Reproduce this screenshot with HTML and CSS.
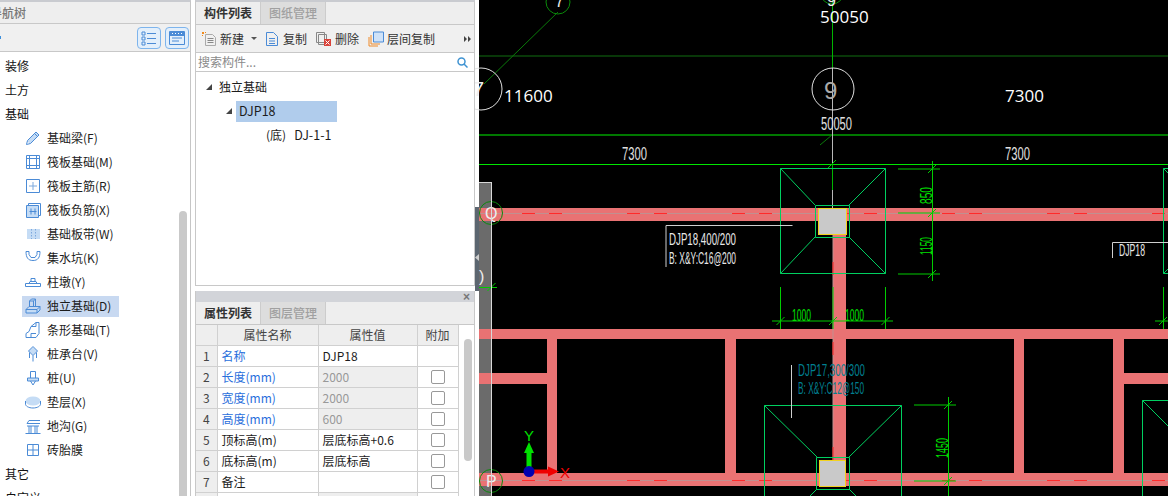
FILE: index.html
```html
<!DOCTYPE html>
<html lang="zh">
<head>
<meta charset="utf-8">
<title>构件列表</title>
<link rel="stylesheet" href="styles.css">
</head>
<body>
<div class="page">
  <section class="nav">
    <div class="nav-title"><span>导航树</span></div>
    <div class="nav-tools">
      <span class="nav-mark"></span>
      <button class="tool-btn"><svg width="16" height="16" viewBox="0 0 16 16" class="ico"><path d="M1 2h3v3H1zM1 7h3v3H1zM1 12h3v3H1zM6 3.500h9M6 8.500h9M6 13.500h9"/></svg></button>
      <button class="tool-btn"><svg width="16" height="16" viewBox="0 0 16 16" class="ico"><path d="M.5 1.500h15v13H.5zM3 8h10M3 11h7"/><path class="solid" d="M1 2h14v4H1z"/><path class="white" d="M3 3h1v1H3zM6 3h1v1H6zM9 3h1v1H9zM12 3h1v1h-1z"/></svg></button>
    </div>
    <div class="nav-body">
      <ul class="nav-list">
        <li class="nav-group">装修</li>
        <li class="nav-group">土方</li>
        <li class="nav-group">基础</li>
        <li class="nav-item"><svg width="16" height="16" viewBox="0 0 16 16" class="ico"><path class="tint" d="M2 11L11 2l3 3-9 9z"/><path d="M1.500 14.500l1-4L11 2l3 3-8.500 8.500zM9.500 3.500l3 3"/></svg>基础梁(F)</li>
        <li class="nav-item"><svg width="16" height="16" viewBox="0 0 16 16" class="ico"><path class="thin" d="M4.500 4.500h7v7h-7z"/><path d="M1.500 1.500h13v13h-13zM1.500 4.500h13M1.500 11.500h13M4.500 1.500v13M11.500 1.500v13"/></svg>筏板基础(M)</li>
        <li class="nav-item"><svg width="16" height="16" viewBox="0 0 16 16" class="ico"><path d="M1.500 1.500h13v13h-13z"/><path class="thin" d="M8 4v8M4 8h8"/></svg>筏板主筋(R)</li>
        <li class="nav-item"><svg width="16" height="16" viewBox="0 0 16 16" class="ico"><path class="tint" d="M1.500 3.500h12v12h-12z"/><path d="M1.500 3.500h12v12h-12zM3.500 3.500v-2h12v12h-2M6 6.500v6M10 6.500v6M4.500 9.500h7"/></svg>筏板负筋(X)</li>
        <li class="nav-item"><svg width="16" height="16" viewBox="0 0 16 16" class="ico"><path class="tint" d="M2 3h13v10H2z"/><path class="thin" stroke-dasharray="1.500 1.500" d="M6.500 3v10M10.500 3v10"/></svg>基础板带(W)</li>
        <li class="nav-item"><svg width="16" height="16" viewBox="0 0 16 16" class="ico"><path d="M1 1.500h3v3l2 3h4l2-3v-3h3M1 1.500c0 6 2 9 7 9s7-3 7-9"/></svg>集水坑(K)</li>
        <li class="nav-item"><svg width="16" height="16" viewBox="0 0 16 16" class="ico"><path d="M.500 12.500h15v-3H.500zM4 9.500l1-2h6l1 2M6 7.500v-3h4v3"/></svg>柱墩(Y)</li>
        <li class="nav-item active"><svg width="16" height="16" viewBox="0 0 16 16" class="ico"><path class="tint" d="M1 11h14v4H1z"/><path d="M1 11.500l3-3h11l-3 3zM1 11.500h11v3.500H1zM12 15l3-3v-3.500M4.500 9V3l2-2h4v7.500M4.500 3h4v5.500M8.500 3l2-2"/></svg>独立基础(D)</li>
        <li class="nav-item"><svg width="16" height="16" viewBox="0 0 16 16" class="ico"><path d="M1 15.500v-4l3-2 2-5 5-4h3v11l-3 4zM6 4.500h5v-4M6 15.500v-4h5"/></svg>条形基础(T)</li>
        <li class="nav-item"><svg width="16" height="16" viewBox="0 0 16 16" class="ico"><path class="tint" d="M8 1l4.500 4L8 9 3.500 5z"/><path d="M8 .5l4.500 4.500L8 9.500 3.500 5zM4.500 6.500V12M8 9.500v6M11.500 6.500V12"/></svg>桩承台(V)</li>
        <li class="nav-item"><svg width="16" height="16" viewBox="0 0 16 16" class="ico"><path class="tint" d="M3 8h10v3H3z"/><path d="M5.500 8V1.500h5V8M2.500 8h11v3h-11zM5.500 11l2.500 4 2.500-4"/></svg>桩(U)</li>
        <li class="nav-item"><svg width="16" height="16" viewBox="0 0 16 16" class="ico"><ellipse class="tint" cx="8" cy="7" rx="7.500" ry="4.500"/><path d="M.500 7v3c0 2 3 4 7.500 4s7.500-2 7.500-4V7"/></svg>垫层(X)</li>
        <li class="nav-item"><svg width="16" height="16" viewBox="0 0 16 16" class="ico"><path d="M.500 15.500h15M2 5.500h13M2 5.500l2-3h11M2 8h12M4 8v7.500M12 8v7.500M6 8v7.500M10 8v7.500"/></svg>地沟(G)</li>
        <li class="nav-item"><svg width="16" height="16" viewBox="0 0 16 16" class="ico"><path d="M2.500 2.500h11v11h-11zM8 2.500v11M2.500 8h11"/></svg>砖胎膜</li>
        <li class="nav-group">其它</li>
        <li class="nav-group">自定义</li>
      </ul>
      <div class="thumb nav-thumb"></div>
    </div>
  </section>

  <div class="middle">
    <section class="parts">
      <div class="tabs">
        <span class="tab on">构件列表</span>
        <span class="tab">图纸管理</span>
      </div>
      <div class="toolbar">
        <span class="act"><svg width="16" height="16" viewBox="0 0 16 16" class="doc"><path d="M4.500 3.500h7l3 3v8h-10z"/><path class="lines" d="M6.500 7.500h6M6.500 9.500h6M6.500 11.500h6"/><path class="spark" d="M1 1h2v2H1zM4 1h1v1H4zM1 4h1v1H1z"/></svg>新建<i class="caret"></i></span>
        <span class="act"><svg width="15" height="16" viewBox="0 0 15 16" class="ico"><path d="M1.500 1.500h7l4 4v9h-11zM4 7.500h6M4 10h6M4 12.500h6"/></svg>复制</span>
        <span class="act"><svg width="16" height="16" viewBox="0 0 16 16" class="del"><path d="M.5 1.500h8v10H.5zM2.500 3.500h8v10h-8z"/><path class="box" d="M8 8h7v7H8z"/><path class="x" d="M9.500 9.500l4 4M13.500 9.500l-4 4"/></svg>删除</span>
        <span class="act"><svg width="16" height="16" viewBox="0 0 16 16" class="lay"><path class="back" d="M1 6v9h9M3 4v9h9"/><path class="front" d="M5.500 1h10v10h-10z"/></svg>层间复制</span>
        <span class="more">
          <svg width="8" height="8" viewBox="0 0 8 8"><path d="M0 1l3 3-3 3zM4 1l3 3-3 3z"/></svg>
        </span>
      </div>
      <div class="search">
        <span>搜索构件...</span>
        <svg width="11" height="11" viewBox="0 0 11 11"><circle cx="4.500" cy="4.500" r="3.500"/><path d="M7 7l3.500 3.500"/></svg>
      </div>
      <ul class="tree">
        <li class="tree-row"><i class="tri"></i>独立基础</li>
        <li class="tree-row lv2"><i class="tri"></i><span class="sel">DJP18</span></li>
        <li class="tree-row lv3"><span>(底)</span><span class="code">DJ-1-1</span></li>
      </ul>
    </section>

    <section class="props">
      <div class="closebar"><span>×</span></div>
      <div class="tabs">
        <span class="tab on">属性列表</span>
        <span class="tab">图层管理</span>
      </div>
      <div class="grid-wrap">
        <table class="grid">
          <colgroup><col class="c0"><col class="c1"><col class="c2"><col class="c3"></colgroup>
          <thead><tr><th></th><th>属性名称</th><th>属性值</th><th>附加</th></tr></thead>
          <tbody>
            <tr><th>1</th><td class="pub">名称</td><td>DJP18</td><td></td></tr>
            <tr><th>2</th><td class="pub">长度(mm)</td><td class="ro">2000</td><td class="ck"><i></i></td></tr>
            <tr><th>3</th><td class="pub">宽度(mm)</td><td class="ro">2000</td><td class="ck"><i></i></td></tr>
            <tr><th>4</th><td class="pub">高度(mm)</td><td class="ro">600</td><td class="ck"><i></i></td></tr>
            <tr><th>5</th><td>顶标高(m)</td><td>层底标高+0.6</td><td class="ck"><i></i></td></tr>
            <tr><th>6</th><td>底标高(m)</td><td>层底标高</td><td class="ck"><i></i></td></tr>
            <tr><th>7</th><td>备注</td><td></td><td class="ck"><i></i></td></tr>
            <tr><th></th><td></td><td class="ro"></td><td></td></tr>
          </tbody>
        </table>
        <div class="thumb grid-thumb"></div>
      </div>
    </section>
  </div>

  <svg class="cad" width="693" height="496" viewBox="475 0 693 496">
    <rect class="c-white" x="475" y="0" width="4" height="496"/>
    <rect class="c-slate" x="475" y="207" width="4" height="84"/>
    <rect class="c-black" x="479" y="0" width="689" height="496"/>
    <rect class="c-grey" x="479" y="182" width="12" height="314"/>
    <path class="c-tri" d="M479 254v7l-4-3.500z"/>

    <g class="beam">
      <rect x="479" y="208" width="689" height="13"/>
      <rect x="479" y="329" width="689" height="10"/>
      <rect x="479" y="473" width="689" height="13"/>
      <rect x="479" y="373" width="68" height="11"/>
      <rect x="1124" y="373" width="44" height="11"/>
      <rect x="547" y="339" width="10" height="134"/>
      <rect x="725" y="339" width="11" height="134"/>
      <rect x="1014" y="339" width="10" height="134"/>
      <rect x="1113" y="339" width="11" height="134"/>
      <rect x="833" y="221" width="13" height="265"/>
    </g>
    <path class="axis-grey" d="M479 213.500H1168M479 480.500H1168M833 221V486"/>
    <path class="axis-red" d="M522 213.500H1168M522 480.500H1168"/>
    <path class="axis-red-v" d="M833 262v13M833 342v13M833 447v13"/>

    <path class="dark-line" d="M479 56H1168"/>
    <path class="mid-line" d="M479 135H1168"/>
    <path class="bright-line" d="M479 164.500H1168"/>
    <path class="diag" d="M558 12L484 84M832 135l-12 10"/>
    <path class="vert-green" d="M832.500 0V68M832.500 164V190"/>
    <path class="vert-grey" d="M832.500 68V164M832.500 190V235"/>

    <g class="found">
      <path d="M780.500 168.500h105v105h-105zM780.500 168.500L815 205M885.500 168.500L849 205M780.500 273.500L815 237M885.500 273.500L849 237"/>
      <path d="M815.500 205.500h34v32h-34z"/>
      <path d="M764.500 405.500h137M764.500 405.500V496M901.500 405.500V496M764.500 405.500L817 457M901.500 405.500L849 457M817 489l-7 7M849 489l7 7"/>
      <path d="M816.500 457.500h33v32h-33z"/>
      <path d="M1163.500 168.500H1168M1163.500 168.500V273.500H1168M1163.500 168.500l5 5M1163.500 273.500l5-5"/>
      <path d="M1142.500 400.500H1168M1142.500 400.500V496M1142.500 400.500L1168 426"/>
    </g>
    <rect class="col" x="818.500" y="208.500" width="28" height="26"/>
    <rect class="col" x="819.500" y="460.500" width="26" height="26"/>

    <g class="dim">
      <path d="M932.500 161V281M898 169h42M898 213h42M898 274h42"/>
      <path d="M772 321h121M780.500 287V329M833 287V329M885.500 287V329"/>
      <path d="M479 287.500h18M491.500 282v10"/>
      <path d="M948.500 397V496M914 405h42M914 481h42"/>
      <path class="tick" d="M828 168l8-8M928 173l8-8M928 217l8-8M928 278l8-8M776.500 325l8-8M829 325l8-8M881.500 325l8-8M487.500 291l8-8M944 409l8-8M944 485l8-8M1159 325l8-8"/>
      <path d="M1163.500 287V329M1155 321h13"/>
      <text class="t-dim" x="792" y="321" textLength="19" lengthAdjust="spacingAndGlyphs">1000</text>
      <text class="t-dim" x="845" y="321" textLength="19" lengthAdjust="spacingAndGlyphs">1000</text>
      <text class="t-dim" transform="rotate(-90 932 204)" x="932" y="204" textLength="17" lengthAdjust="spacingAndGlyphs">850</text>
      <text class="t-dim" transform="rotate(-90 932 255)" x="932" y="255" textLength="18" lengthAdjust="spacingAndGlyphs">1150</text>
      <text class="t-dim" transform="rotate(-90 948 458)" x="948" y="458" textLength="20" lengthAdjust="spacingAndGlyphs">1450</text>
    </g>

    <g class="t-big">
      <text x="820" y="23">50050</text>
      <text x="504" y="102">11600</text>
      <text x="1005" y="102">7300</text>
    </g>
    <g class="t-cad">
      <text x="821" y="130" textLength="31" lengthAdjust="spacingAndGlyphs">50050</text>
      <text x="622" y="160" textLength="25" lengthAdjust="spacingAndGlyphs">7300</text>
      <text x="1005" y="160" textLength="25" lengthAdjust="spacingAndGlyphs">7300</text>
    </g>

    <g class="label">
      <path d="M666 267V225.500H792.500"/>
      <path d="M1112.500 258V242.500H1168"/>
      <path d="M791.500 365V418"/>
    </g>
    <g class="t-label">
      <text x="669" y="245" textLength="67" lengthAdjust="spacingAndGlyphs">DJP18,400/200</text>
      <text x="669" y="264" textLength="67" lengthAdjust="spacingAndGlyphs">B: X&amp;Y:C16@200</text>
      <text x="1119" y="256" textLength="26" lengthAdjust="spacingAndGlyphs">DJP18</text>
    </g>
    <g class="t-label cyan">
      <text x="798" y="376" textLength="67" lengthAdjust="spacingAndGlyphs">DJP17,300/300</text>
      <text x="798" y="394" textLength="66" lengthAdjust="spacingAndGlyphs">B: X&amp;Y:C12@150</text>
    </g>

    <circle class="ring" cx="481" cy="89" r="21"/>
    <circle class="ring" cx="833" cy="89" r="21"/>
    <text class="t-seven" x="473" y="96">7</text>
    <text class="t-nine" x="824" y="99">9</text>
    <circle class="ring-g" cx="558" cy="2" r="12"/>
    <circle class="ring-g" cx="832" cy="-8" r="12"/>
    <text class="t-num" x="555" y="7">7</text>
    <text class="t-num" x="827" y="6">9</text>
    <circle class="ring-g" cx="491" cy="213" r="11.500"/>
    <circle class="ring-g" cx="491" cy="481" r="11.500"/>
    <text class="t-num" x="485" y="219">Q</text>
    <text class="t-num" x="486" y="487">P</text>
    <path class="c-strip" d="M491.500 182V496M479 182.500h12"/>
    <text class="t-num" x="479" y="282">)</text>

    <g class="ucs">
      <path class="g" d="M529 472V450"/>
      <path class="gf" d="M529 442l5 11h-10z"/>
      <path class="r" d="M532 471.500H550"/>
      <path class="rf" d="M559 471.500l-11-5v10z"/>
      <circle class="b" cx="529" cy="471.500" r="5.500"/>
      <text class="ty" x="524" y="441" textLength="10" lengthAdjust="spacingAndGlyphs">Y</text>
      <text class="tx" x="560" y="478" textLength="10" lengthAdjust="spacingAndGlyphs">X</text>
    </g>
  </svg>
</div>
</body>
</html>
```
FILE: styles.css
```css
* { box-sizing: border-box; }
html, body { margin: 0; padding: 0; }
body {
  width: 1168px;
  height: 496px;
  overflow: hidden;
  background: #fff;
  font: 12px/1 "Noto Sans CJK SC", "Liberation Sans", sans-serif;
  color: #1c1c1c;
}
.page { display: flex; width: 1168px; height: 496px; overflow: hidden; }
ul { list-style: none; margin: 0; padding: 0; }

/* icons */
.ico { fill: none; stroke: #4b8bd6; stroke-width: 1; flex: none; }
.ico .tint { fill: #c5dcf5; stroke: none; }
.ico .thin { stroke: #7da9dd; }
.ico .solid { fill: #4b8bd6; stroke: none; }
.ico .white { fill: #fff; stroke: none; }

/* navigation */
.nav {
  width: 191px;
  flex: none;
  display: flex;
  flex-direction: column;
  border-top: 2px solid #c9cbd0;
  border-right: 1px solid #c6c6c6;
  overflow: hidden;
}
.nav-title {
  height: 22px;
  flex: none;
  display: flex;
  align-items: center;
  background: #eee;
  border-bottom: 1px solid #c8c8c8;
  color: #777;
  font-weight: 500;
}
.nav-title span { margin-left: -10px; }
.nav-tools {
  height: 28px;
  flex: none;
  display: flex;
  align-items: center;
  justify-content: flex-end;
  gap: 4px;
  padding-right: 1px;
  background: #f0f0f0;
  border-bottom: 1px solid #c8c8c8;
}
.nav-mark { width: 1px; height: 3px; margin-right: auto; background: #3d8fdc; }
.tool-btn {
  width: 24px;
  height: 22px;
  padding: 0;
  display: flex;
  align-items: center;
  justify-content: center;
  background: #e3effb;
  border: 1px solid #7db4ec;
  border-radius: 4px;
}
.nav-body { flex: 1; min-height: 0; display: flex; padding-right: 3px; }
.nav-list { flex: 1; min-width: 0; padding-top: 2px; }
.nav-group {
  height: 24px;
  display: flex;
  align-items: center;
  padding-left: 5px;
  color: #111;
}
.nav-item {
  width: 97px;
  height: 24px;
  margin-left: 22px;
  padding: 0 0 1px 3px;
  display: flex;
  align-items: center;
  gap: 6px;
  white-space: nowrap;
  border-top: 2px solid transparent;
  border-bottom: 1px solid transparent;
  background-clip: padding-box;
}
.nav-item.active { background-color: #c8d9f1; }
.thumb { background: #c9c9c9; border-radius: 4px; }
.nav-thumb { width: 8px; height: 300px; margin-top: 159px; flex: none; }

/* middle column */
.middle {
  width: 284px;
  flex: none;
  padding-left: 4px;
  display: flex;
  flex-direction: column;
}
.parts {
  height: 286px;
  flex: none;
  display: flex;
  flex-direction: column;
  border-top: 2px solid #c9cbd0;
  border-left: 1px solid #c8c8c8;
  border-right: 1px solid #c8c8c8;
  border-bottom: 1px solid #c8c8c8;
}
.tabs {
  height: 23px;
  flex: none;
  display: flex;
  background: #eee;
  border-bottom: 1px solid #c8c8c8;
}
.tab {
  width: 65px;
  display: flex;
  align-items: center;
  justify-content: center;
  font-weight: 500;
  color: #a0a0a0;
  background: #ddd;
  border-right: 1px solid #ccc;
}
.tab.on { color: #333; background: #eee; font-weight: 700; }
.toolbar {
  height: 28px;
  flex: none;
  display: flex;
  align-items: center;
  padding-left: 5px;
  background: #f0f0f0;
  border-bottom: 1px solid #c8c8c8;
}
.act { display: flex; align-items: center; gap: 3px; margin-right: 9px; color: #333; white-space: nowrap; }
.act:first-child { margin-right: 8px; }
.caret {
  width: 0;
  height: 0;
  margin-left: 4px;
  border-left: 3px solid transparent;
  border-right: 3px solid transparent;
  border-top: 3px solid #555;
}
.more { margin-left: auto; margin-right: 2px; display: flex; }
.more path { fill: #444; }
.doc { fill: none; stroke: #aaa; flex: none; }
.doc .lines { stroke: #888; }
.doc .spark { fill: #f08a1c; stroke: none; }
.del { fill: none; stroke: #888; flex: none; }
.del .box { fill: #d9433a; stroke: none; }
.del .x { stroke: #fff; }
.lay { fill: none; flex: none; }
.lay .back { stroke: #ee8a2a; }
.lay .front { fill: #cfe2f8; stroke: #4b8bd6; }
.search {
  height: 19px;
  flex: none;
  display: flex;
  align-items: center;
  justify-content: space-between;
  padding: 0 6px 0 2px;
  color: #8a8a8a;
  border-bottom: 1px solid #c8c8c8;
}
.search svg { fill: none; stroke: #3f93d2; stroke-width: 1.5; }
.tree { flex: 1; padding-top: 3px; }
.tree-row { height: 24px; display: flex; align-items: center; padding-left: 10px; white-space: nowrap; }
.tri {
  width: 0;
  height: 0;
  margin-right: 7px;
  border-left: 6px solid transparent;
  border-bottom: 6px solid #444;
}
.lv2 { padding-left: 30px; }
.lv2 .tri { margin-right: 4px; }
.sel { width: 101px; height: 21px; padding-left: 3px; display: flex; align-items: center; background: #b0ccec; font-size: 12.500px; }
.lv3 { padding-left: 70px; }
.code { margin-left: 8px; font-size: 12.500px; }

/* property table */
.props { margin-top: 5px; flex: 1; min-height: 0; display: flex; flex-direction: column; border-left: 1px solid #c8c8c8; border-right: 1px solid #c8c8c8; overflow: hidden; }
.closebar {
  height: 11px;
  flex: none;
  display: flex;
  align-items: center;
  justify-content: flex-end;
  padding-right: 4px;
  background: #d2d4d9;
  color: #777;
  font-size: 12px;
  font-family: "Liberation Sans", sans-serif;
  font-weight: 700;
}
.props .tabs { height: 23px; }
.grid-wrap { flex: 1; display: flex; min-height: 0; }
.grid { width: 262px; height: 167px; flex: none; table-layout: fixed; border-collapse: collapse; }
.c0 { width: 21px; }
.c1 { width: 101px; }
.c2 { width: 99px; }
.c3 { width: 41px; }
.grid th, .grid td {
  height: 21px;
  padding: 0 3px 0 4px;
  border: 1px solid #d0d0d0;
  border-left: 0;
  font-weight: 400;
  overflow: hidden;
  white-space: nowrap;
}
.grid thead th { height: 20px; border-top: 0; }
.grid th { background: #eee; color: #444; text-align: center; padding: 0; }
.grid td { background: #fff; }
.grid td.pub { color: #2a6fdc; }
.grid td.ro { background: #eee; color: #999; }
.grid td.ck { text-align: center; padding: 0 3px; }
.ck i { display: inline-block; width: 14px; height: 14px; border: 1px solid #999; border-radius: 2px; background: #fff; vertical-align: middle; }
.grid-thumb { width: 8px; height: 122px; margin: 14px 0 0 5px; flex: none; }

/* CAD canvas */
.cad { flex: none; display: block; }
.c-white { fill: #fff; }
.c-slate { fill: #5c6670; }
.c-black { fill: #000; }
.c-grey { fill: #6b6b6b; }
.c-tri { fill: #ccc; }
.c-strip { fill: none; stroke: #d8d8d8; }
.beam rect { fill: #e97273; }
.axis-grey { fill: none; stroke: #c09090; stroke-width: 1; }
.axis-red { fill: none; stroke: #ff2a2a; stroke-width: 1; stroke-dasharray: 13 14 13 65; }
.axis-red-v { fill: none; stroke: #ff1c1c; stroke-width: 1; }
.dark-line { stroke: #0b4a0b; stroke-width: 1.500; }
.mid-line { stroke: #00a000; stroke-width: 1.500; }
.bright-line { stroke: #00e600; stroke-width: 1; }
.diag { stroke: #0a7a0a; fill: none; }
.vert-green { stroke: #00b400; fill: none; }
.vert-grey { stroke: #b8b8b8; fill: none; }
.found path { fill: none; stroke: #00d060; stroke-width: 1; }
.col { fill: #c9c9c9; stroke: #f2d21e; stroke-width: 1; }
.dim path { fill: none; stroke: #00cc00; stroke-width: 1; }
.t-dim { fill: #00e000; font: 16px "Liberation Sans", sans-serif; }
.t-big { fill: #fff; font: 17px "Open Sans", sans-serif; }
.t-cad { fill: #e0e0e0; font: 19px "Liberation Sans", sans-serif; }
.label path { fill: none; stroke: #cfcfcf; }
.t-label { fill: #e8e8e8; font: 16px "Liberation Sans", sans-serif; }
.t-label.cyan { fill: #007f90; }
.ring { fill: none; stroke: #e0e0e0; }
.ring-g { fill: none; stroke: #0a8a0a; }
.t-num { fill: #eee; font: 16px "Liberation Sans", sans-serif; }
.t-seven { fill: #eee; font: 20px "Liberation Sans", sans-serif; }
.t-nine { fill: #aaa; font: 24px "Liberation Sans", sans-serif; }
.ucs .g { stroke: #00e000; stroke-width: 5; fill: none; }
.ucs .gf { fill: #00e000; }
.ucs .r { stroke: #f00000; stroke-width: 4; fill: none; }
.ucs .rf { fill: #f00000; }
.ucs .b { fill: #0000b0; }
.ty { fill: #00e000; font: 14px "Liberation Sans", sans-serif; }
.tx { fill: #f00000; font: 14px "Liberation Sans", sans-serif; }
```
